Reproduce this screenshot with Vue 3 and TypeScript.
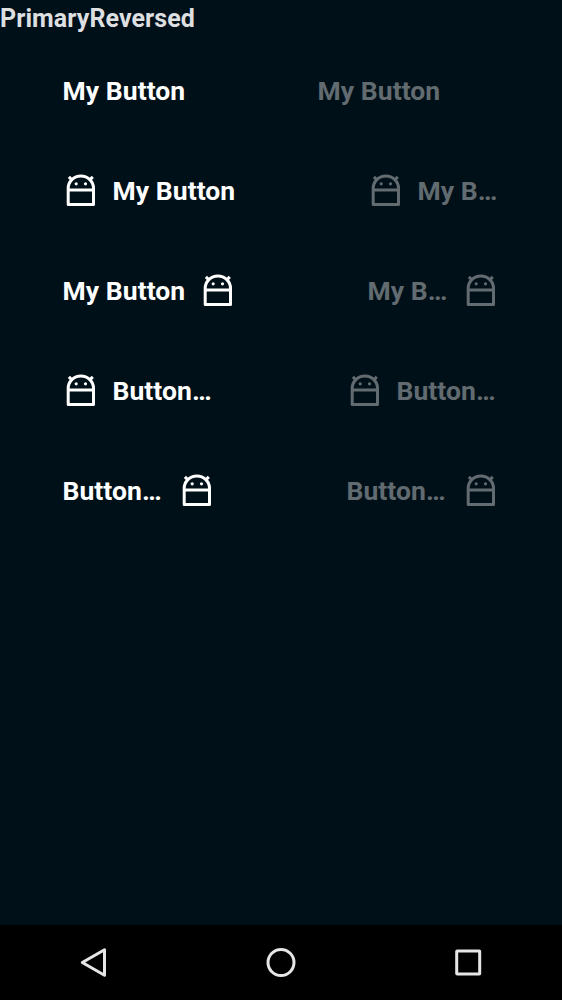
<script setup lang="ts">
type IconSide = 'none' | 'left' | 'right'

interface ButtonSpec {
  label: string
  icon: IconSide
  disabled: boolean
  width: number
}

const rows: ButtonSpec[][] = [
  [
    { label: 'My Button', icon: 'none', disabled: false, width: 123 },
    { label: 'My Button', icon: 'none', disabled: true, width: 182.5 },
  ],
  [
    { label: 'My Button', icon: 'left', disabled: false, width: 174 },
    { label: 'My B…', icon: 'left', disabled: true, width: 132.5 },
  ],
  [
    { label: 'My Button', icon: 'right', disabled: false, width: 174 },
    { label: 'My B…', icon: 'right', disabled: true, width: 132.5 },
  ],
  [
    { label: 'Button…', icon: 'left', disabled: false, width: 153 },
    { label: 'Button…', icon: 'left', disabled: true, width: 153.5 },
  ],
  [
    { label: 'Button…', icon: 'right', disabled: false, width: 153 },
    { label: 'Button…', icon: 'right', disabled: true, width: 153.5 },
  ],
]
</script>

<template>
  <div class="screen">
    <h1 class="title">PrimaryReversed</h1>
    <main class="rows">
      <div v-for="(row, r) in rows" :key="r" class="row">
        <button
          v-for="(b, c) in row"
          :key="c"
          class="btn"
          :class="{ 'icon-left': b.icon === 'left', 'icon-right': b.icon === 'right' }"
          :disabled="b.disabled"
          :style="{ width: b.width + 'px' }"
        >
          <svg v-if="b.icon !== 'none'" class="icon" viewBox="0 0 38 38">
            <path
              class="line"
              d="M6.2 32.5V16.3A12.65 12.3 0 0 1 31.5 16.3V32.5H6.2ZM6.2 18H31.5"
            />
            <path class="line" d="M6.9 4.9L10.4 8.4M30.8 4.9L27.3 8.4" />
            <circle cx="14.2" cy="11.8" r="1.6" />
            <circle cx="23.5" cy="11.8" r="1.6" />
          </svg>
          <span class="label">{{ b.label }}</span>
        </button>
      </div>
    </main>
    <nav class="navbar">
      <svg class="nav-icon" viewBox="0 0 40 40">
        <path d="M30.5 6.7V32.3L8.3 19.5Z" />
      </svg>
      <svg class="nav-icon" viewBox="0 0 40 40">
        <circle cx="20" cy="19.5" r="13" />
      </svg>
      <svg class="nav-icon" viewBox="0 0 40 40">
        <rect x="8.7" y="8" width="23" height="23" rx="0.5" />
      </svg>
    </nav>
  </div>
</template>

<style>
body {
  margin: 0;
  background: #001018;
}
</style>

<style scoped>
.screen {
  display: flex;
  flex-direction: column;
  height: 1000px;
  background: #001018;
  font-family: Roboto, "Liberation Sans", sans-serif;
}
.title {
  margin: 0;
  height: 41px;
  font-size: 25px;
  line-height: 38px;
  font-weight: 700;
  letter-spacing: 0.08px;
  color: #dedfe0;
}
.rows {
  flex: 1;
}
.row {
  display: flex;
  justify-content: space-between;
  align-items: center;
  height: 100px;
  padding: 0 62px 0 62.5px;
}
.btn {
  display: flex;
  align-items: center;
  gap: 12px;
  padding: 0;
  border: 0;
  background: none;
  color: #fff;
  font: 700 26.5px/36px Roboto, "Liberation Sans", sans-serif;
  letter-spacing: 0.05px;
  white-space: nowrap;
}
.btn:disabled {
  color: #626b70;
}
.icon-right {
  flex-direction: row-reverse;
  justify-content: space-between;
}
.icon-left .icon {
  margin: 0 0.7px 0 -0.7px;
}
.icon {
  flex: none;
  width: 38px;
  height: 38px;
  fill: currentColor;
}
.line {
  fill: none;
  stroke: currentColor;
  stroke-width: 3;
  stroke-linejoin: round;
}
.navbar {
  display: flex;
  justify-content: space-between;
  align-items: center;
  height: 75px;
  padding: 0 74px;
  background: #000;
}
.nav-icon {
  width: 40px;
  height: 40px;
  fill: none;
  stroke: #e6e6e6;
  stroke-width: 3;
  stroke-linejoin: round;
}
</style>
